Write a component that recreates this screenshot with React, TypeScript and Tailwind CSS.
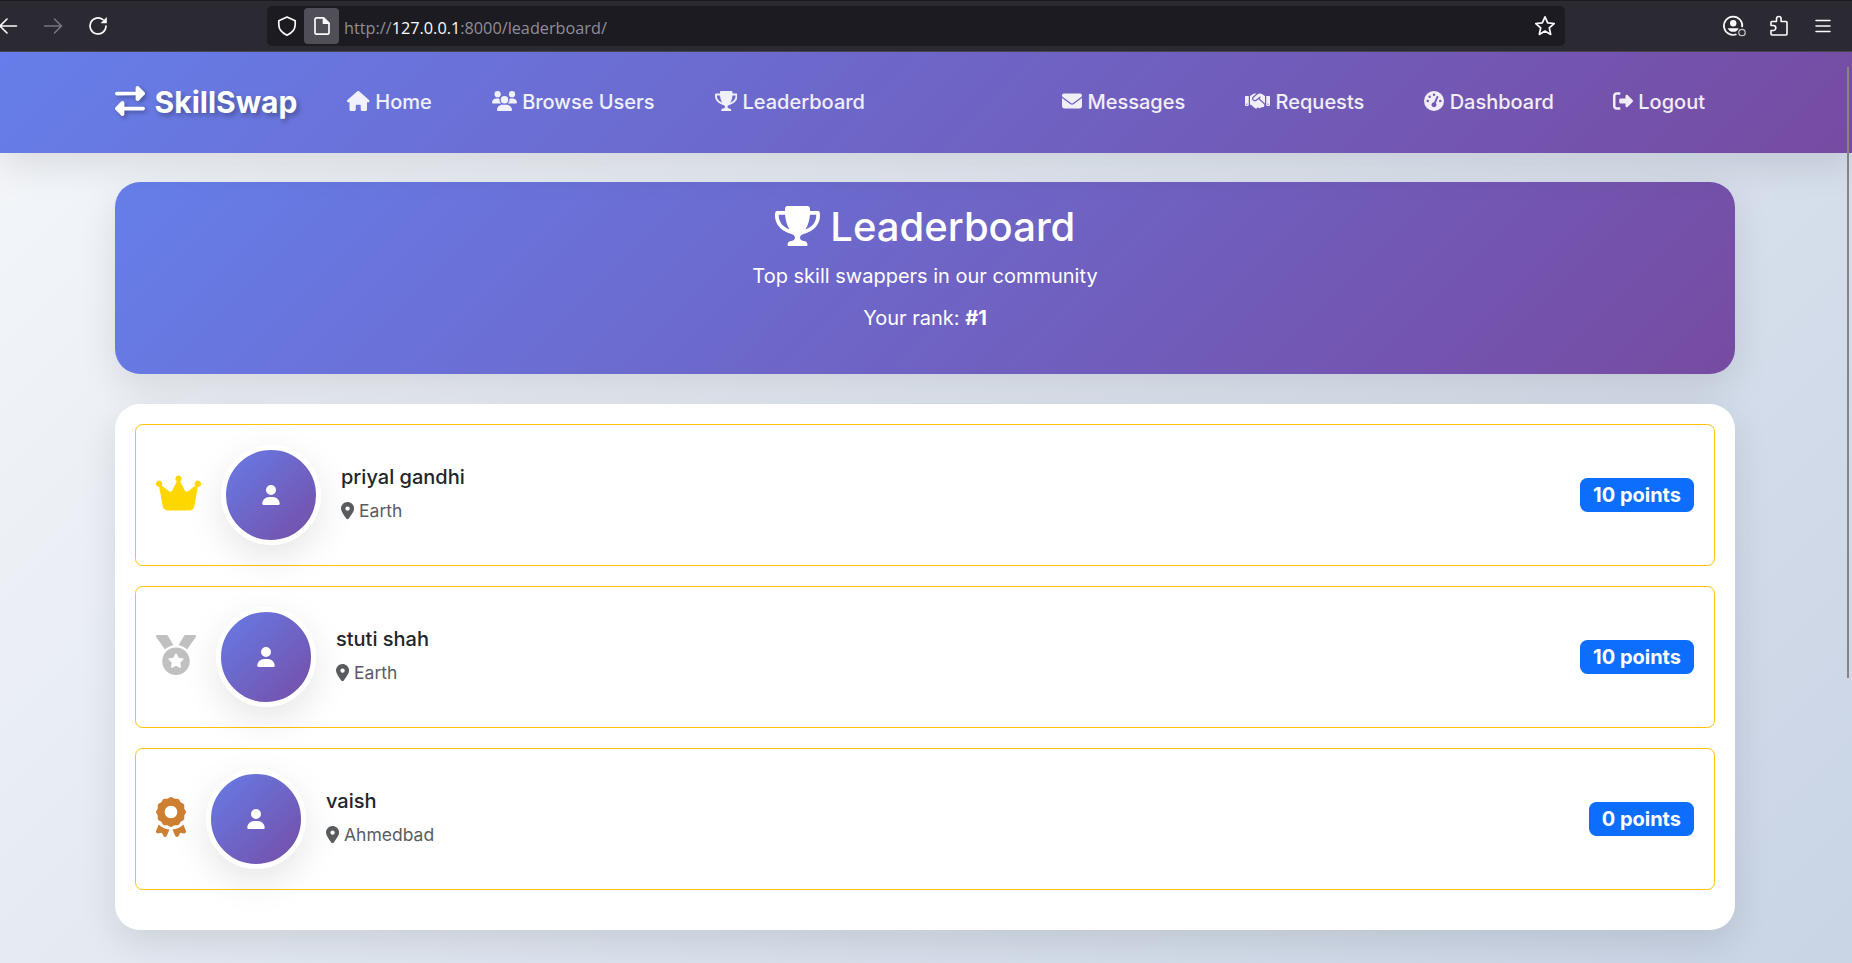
import type { ComponentType, ReactNode } from "react";
import {
  FaCrown,
  FaEnvelope,
  FaGaugeHigh,
  FaHandshake,
  FaHouse,
  FaLocationDot,
  FaRightFromBracket,
  FaRightLeft,
  FaUser,
  FaUsers,
} from "react-icons/fa6";

type Icon = ComponentType<{ className?: string }>;

const glyph = "inline-block h-[1em] align-[-0.125em]";

function Trophy({ className }: { className?: string }) {
  return (
    <svg className={className} viewBox="0 0 576 512" fill="currentColor">
      <path d="M572.1 82.38C569.5 71.59 559.8 64 548.7 64h-100.8c.2422-12.45 .1078-23.7-.1559-33.02C447.3 13.63 433.2 0 415.8 0H160.2C142.8 0 128.7 13.63 128.2 30.98C127.9 40.3 127.8 51.55 128.1 64H27.26C16.16 64 6.537 71.59 3.912 82.38C3.1 85.78-15.71 167.2 37.07 245.9c37.44 55.82 100.6 95.03 187.5 117.4c18.7 4.805 31.41 22.06 31.41 41.37C256 428.5 236.5 448 212.6 448H208c-26.51 0-48 21.49-48 48c0 8.836 7.163 16 16 16h224c8.836 0 16-7.164 16-16c0-26.51-21.48-48-48-48h-4.644c-23.86 0-43.36-19.5-43.36-43.35c0-19.31 12.71-36.57 31.41-41.37c86.96-22.34 150.1-61.55 187.5-117.4C591.7 167.2 572.9 85.78 572.1 82.38zM77.41 219.8C49.47 178.6 47.01 135.7 48.38 112h80.39c5.359 59.62 20.35 131.1 57.67 189.1C137.4 281.6 100.9 254.4 77.41 219.8zM498.6 219.8c-23.44 34.6-59.94 61.75-109 81.22C426.9 243.1 441.9 171.6 447.2 112h80.39C528.1 135.7 526.5 178.7 498.6 219.8z" />
    </svg>
  );
}

function Medal({ className }: { className?: string }) {
  return (
    <svg className={className} viewBox="0 0 512 512" fill="currentColor">
      <path d="M223.7 130.8L150 7.77C147.1 2.949 141.9 0 136.3 0H16.03c-12.95 0-20.53 14.58-13.1 25.18l111.3 158.9C143.9 156.4 181.7 137.3 223.7 130.8zM256 160c-97.25 0-176 78.75-176 176S158.8 512 256 512s176-78.75 176-176S353.3 160 256 160zM348.5 317.3l-37.88 37l8.875 52.25c1.625 9.25-8.25 16.5-16.63 12l-46.88-24.62L209.1 418.5c-8.375 4.5-18.25-2.75-16.63-12l8.875-52.25l-37.88-37C156.6 310.6 160.5 299 169.9 297.6l52.25-7.625L245.7 242.5c2-4.25 6.125-6.375 10.25-6.375S264.2 238.3 266.2 242.5l23.5 47.5l52.25 7.625C351.6 299 355.3 310.6 348.5 317.3zM496 0H375.7c-5.621 0-10.83 2.949-13.72 7.77l-73.76 122.9c42 6.5 79.88 25.62 109.5 53.38l111.3-158.9C516.5 14.58 508.9 0 496 0z" />
    </svg>
  );
}

function Award({ className }: { className?: string }) {
  return (
    <svg className={className} viewBox="0 0 384 512" fill="currentColor">
      <path d="M288 358.3c13.98-8.088 17.53-30.04 28.88-41.39c11.35-11.35 33.3-14.88 41.39-28.87c7.98-13.79 .1658-34.54 4.373-50.29C366.7 222.5 384 208.5 384 192c0-16.5-17.27-30.52-21.34-45.73c-4.207-15.75 3.612-36.5-4.365-50.29c-8.086-13.98-30.03-17.52-41.38-28.87c-11.35-11.35-14.89-33.3-28.87-41.39c-13.79-7.979-34.54-.1637-50.29-4.375C222.5 17.27 208.5 0 192 0C175.5 0 161.5 17.27 146.3 21.34C130.5 25.54 109.8 17.73 95.98 25.7C82 33.79 78.46 55.74 67.11 67.08C55.77 78.43 33.81 81.97 25.72 95.95C17.74 109.7 25.56 130.5 21.35 146.2C17.27 161.5 0 175.5 0 192c0 16.5 17.27 30.52 21.34 45.73c4.207 15.75-3.615 36.5 4.361 50.29C33.8 302 55.74 305.5 67.08 316.9c11.35 11.35 14.89 33.3 28.88 41.4c13.79 7.979 34.53 .1582 50.28 4.369C161.5 366.7 175.5 384 192 384c16.5 0 30.52-17.27 45.74-21.34C253.5 358.5 274.2 366.3 288 358.3zM112 192c0-44.27 35.81-80 80-80s80 35.73 80 80c0 44.17-35.81 80-80 80S112 236.2 112 192zM1.719 433.2c-3.25 8.188-1.781 17.48 3.875 24.25c5.656 6.75 14.53 9.898 23.12 8.148l45.19-9.035l21.43 42.27C99.46 507 107.6 512 116.7 512c.3438 0 .6641-.0117 1.008-.0273c9.5-.375 17.65-6.082 21.24-14.88l33.58-82.08c-53.71-4.639-102-28.12-138.2-63.95L1.719 433.2zM349.6 351.1c-36.15 35.83-84.45 59.31-138.2 63.95l33.58 82.08c3.594 8.797 11.74 14.5 21.24 14.88C266.6 512 266.9 512 267.3 512c9.094 0 17.23-4.973 21.35-13.14l21.43-42.28l45.19 9.035c8.594 1.75 17.47-1.398 23.12-8.148c5.656-6.766 7.125-16.06 3.875-24.25L349.6 351.1z" />
    </svg>
  );
}

function BrowserBar() {
  return (
    <div className="relative z-20 flex h-[52px] shrink-0 items-center border-t border-b border-t-[#1c1b22] border-b-[#45444d] bg-[#2b2a33] text-[#fbfbfe]">
      <div className="flex w-[267px] shrink-0 items-center">
        <svg className="h-5 w-[18px]" viewBox="0 0 18 20" fill="none" stroke="currentColor" strokeWidth="1.6" strokeLinecap="round" strokeLinejoin="round">
          <path d="M16.5 10H.5M7 3 0 10l7 7" />
        </svg>
        <svg className="ml-[25px] h-5 w-5 text-[#77767e]" viewBox="0 0 20 20" fill="none" stroke="currentColor" strokeWidth="1.6" strokeLinecap="round" strokeLinejoin="round">
          <path d="M1.5 10H18M11.5 3l7 7-7 7" />
        </svg>
        <svg className="ml-[25px] h-5 w-5" viewBox="0 0 20 20" fill="none" stroke="currentColor" strokeWidth="1.7" strokeLinecap="round">
          <path d="M18 10a8 8 0 1 1-3-6.3" />
          <path d="M18.8 1v6.2h-6.2z" fill="currentColor" stroke="none" />
        </svg>
      </div>
      <div className="flex h-10 w-[1298px] items-center rounded-[5px] bg-[#1c1b22]">
        <svg className="ml-[10px] h-5 w-5" viewBox="0 0 20 20" fill="none" stroke="currentColor" strokeWidth="1.7" strokeLinejoin="round">
          <path d="M10 1 18.2 4.8v3.8c0 4.6-3 8.4-8.2 10.6C4.800 17 1.800 13.200 1.800 8.600V4.800z" />
        </svg>
        <div className="ml-[7px] flex h-9 w-[35px] items-center justify-center rounded-[4px] bg-[#504f57]">
          <svg className="h-5 w-5" viewBox="0 0 20 20" fill="none" stroke="currentColor" strokeWidth="1.7" strokeLinejoin="round">
            <path d="M4.5 1.800h7L17 7.300v9.400a1.500 1.500 0 0 1-1.500 1.500h-11A1.500 1.500 0 0 1 3 16.700V3.300a1.500 1.500 0 0 1 1.500-1.500z" />
            <path d="M11.5 2v5.200h5.200z" fill="currentColor" />
          </svg>
        </div>
        <span className="ml-[5px] pt-1 font-['Open_Sans',sans-serif] text-[16.25px] text-[#8f8f98]">
          http://<span className="text-[#fbfbfe]">127.0.0.1</span>:8000/leaderboard/
        </span>
        <svg className="mr-[9px] ml-auto h-[22px] w-[22px]" viewBox="0 0 22 22" fill="none" stroke="currentColor" strokeWidth="1.7" strokeLinejoin="round">
          <path d="m11 1.800 2.700 6 6.500.700-4.900 4.400 1.400 6.500L11 16.100l-5.700 3.300 1.400-6.500L1.800 8.500l6.500-.700z" />
        </svg>
      </div>
      <div className="ml-auto flex items-center pr-[21px]">
        <svg className="h-6 w-6" viewBox="0 0 24 24" fill="none" stroke="currentColor" strokeWidth="1.7">
          <path d="M20.2 13.2A9.200 9.200 0 1 0 14.500 20.300" />
          <circle cx="11.2" cy="9.3" r="3.2" fill="currentColor" stroke="none" />
          <path d="M5.700 14.200h11a6 6 0 0 1-11 0z" fill="currentColor" stroke="none" />
          <circle cx="20" cy="18.5" r="3.2" strokeWidth="1.3" className="text-[#c4c4ca]" />
        </svg>
        <svg className="ml-[23px] h-[22px] w-[20px]" viewBox="0 0 20 22" fill="none" stroke="currentColor" strokeWidth="1.6" strokeLinejoin="round">
          <path d="M7.500 6.500V3.800a2.300 2.300 0 0 1 4.600 0v2.700H17a1 1 0 0 1 1 1V19a1 1 0 0 1-1 1H3a1 1 0 0 1-1-1v-3.500h2.300a2.500 2.500 0 0 0 0-5H2v-3a1 1 0 0 1 1-1z" />
        </svg>
        <svg className="ml-[26px] h-4 w-4" viewBox="0 0 16 16" fill="none" stroke="currentColor" strokeWidth="1.5" strokeLinecap="round">
          <path d="M1 2.500h14M1 8h14M1 13.500h14" />
        </svg>
      </div>
    </div>
  );
}

function NavLink({ icon: I, width, children }: { icon: Icon; width: string; children: ReactNode }) {
  return (
    <a className="px-[30px] font-medium whitespace-nowrap text-white/90">
      <I className={`${glyph} ${width}`} /> {children}
    </a>
  );
}

function Navbar() {
  return (
    <nav className="relative z-10 flex h-[101px] shrink-0 items-center bg-[linear-gradient(135deg,#667eea_0%,#764ba2_100%)] pr-[117px] pb-[2px] pl-[115px] leading-8 shadow-[0_12.5px_37.5px_rgba(0,0,0,0.1)]">
      <a className="mr-5 text-[30px] font-bold whitespace-nowrap text-white [text-shadow:2.5px_2.5px_5px_rgba(0,0,0,0.3)]">
        <FaRightLeft className={`${glyph} mr-[2.5px] w-[1em] drop-shadow-[2px_2px_2px_rgba(0,0,0,0.3)]`} /> SkillSwap
      </a>
      <NavLink icon={FaHouse} width="w-[1.125em]">Home</NavLink>
      <NavLink icon={FaUsers} width="w-[1.25em]">Browse Users</NavLink>
      <NavLink icon={Trophy} width="w-[1.125em]">Leaderboard</NavLink>
      <div className="ml-auto flex">
        <NavLink icon={FaEnvelope} width="w-[1em]">Messages</NavLink>
        <NavLink icon={FaHandshake} width="w-[1.25em]">Requests</NavLink>
        <NavLink icon={FaGaugeHigh} width="w-[1em]">Dashboard</NavLink>
        <span className="-ml-px">
          <NavLink icon={FaRightFromBracket} width="w-[1em]">Logout</NavLink>
        </span>
      </div>
    </nav>
  );
}

type Player = { name: string; place: string; points: number; icon: Icon; iconClass: string };

const players: Player[] = [
  { name: "priyal gandhi", place: "Earth", points: 10, icon: FaCrown, iconClass: "w-[45px] text-[#ffd700]" },
  { name: "stuti shah", place: "Earth", points: 10, icon: Medal, iconClass: "w-10 text-[#c0c0c0]" },
  { name: "vaish", place: "Ahmedbad", points: 0, icon: Award, iconClass: "w-[30px] text-[#cd7f32]" },
];

function PlayerRow({ name, place, points, icon: I, iconClass }: Player) {
  return (
    <li className="flex h-[142px] items-center gap-5 rounded-[7.5px] border border-[#ffc107] px-5">
      <I className={`mb-1 h-10 shrink-0 ${iconClass}`} />
      <div className="flex size-[100px] shrink-0 items-center justify-center rounded-full border-[5px] border-white bg-[linear-gradient(135deg,#667eea_0%,#764ba2_100%)] bg-origin-border text-white shadow-[0_12.5px_37.5px_rgba(0,0,0,0.1)]">
        <FaUser className="h-5 w-[18px]" />
      </div>
      <div>
        <h6 className="mb-2 leading-6 font-medium text-[#212529]">{name}</h6>
        <p className="text-[17.5px] leading-[28px] text-[#595c5f]">
          <FaLocationDot className={`${glyph} w-[0.75em]`} /> {place}
        </p>
      </div>
      <span className="ml-auto rounded-[7.5px] bg-[#0d6efd] px-[13px] py-[7px] leading-5 font-bold text-white">
        {points} points
      </span>
    </li>
  );
}

export default function App() {
  return (
    <div className="relative flex h-[963px] flex-col overflow-hidden bg-[linear-gradient(135deg,#f5f7fa_0%,#c3cfe2_100%)] bg-[length:100%_1330px] font-['Inter',sans-serif] text-[20px]">
      <BrowserBar />
      <Navbar />
      <main className="mt-[29px] mr-[117px] ml-[115px] flex flex-col gap-[30px]">
        <header className="h-[192px] rounded-[25px] bg-[linear-gradient(135deg,#667eea_0%,#764ba2_100%)] pt-[21px] text-center leading-8 text-white shadow-[0_12.5px_37.5px_rgba(0,0,0,0.1)]">
          <h2 className="mb-[9px] text-[40px] leading-[48px] font-medium">
            <Trophy className={`${glyph} w-[1.125em]`} /> Leaderboard
          </h2>
          <p className="mb-[10px]">Top skill swappers in our community</p>
          <p>
            Your rank: <strong className="font-bold">#1</strong>
          </p>
        </header>
        <ul className="flex h-[526px] flex-col gap-5 rounded-[25px] bg-white p-5 shadow-[0_12.5px_37.5px_rgba(0,0,0,0.1)]">
          {players.map((p) => (
            <PlayerRow key={p.name} {...p} />
          ))}
        </ul>
      </main>
      <div className="absolute top-[67px] left-[1847px] z-30 h-[611px] w-[2px] bg-[#858585]" />
    </div>
  );
}
